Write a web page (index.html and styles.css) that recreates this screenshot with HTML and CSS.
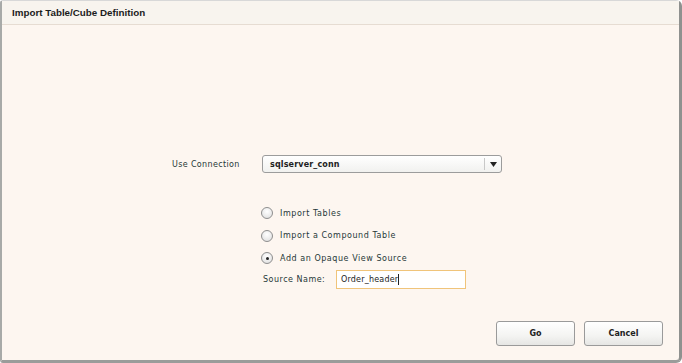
FILE: index.html
```html
<!DOCTYPE html>
<html>
<head>
<meta charset="utf-8">
<link rel="stylesheet" href="styles.css">
</head>
<body>
<div class="dialog">
  <div class="header">Import Table/Cube Definition</div>
  <div class="content">
    <div class="conn-row">
      <div class="label">Use Connection</div>
      <div class="select">
        <span class="select-text">sqlserver_conn</span>
        <span class="select-btn"><svg width="7" height="5" viewBox="0 0 7 5"><path d="M0 0H7L3.5 5Z" fill="#222"/></svg></span>
      </div>
    </div>
    <div class="options">
      <div class="opt"><span class="radio"></span><span>Import Tables</span></div>
      <div class="opt"><span class="radio"></span><span>Import a Compound Table</span></div>
      <div class="opt"><span class="radio checked"></span><span>Add an Opaque View Source</span></div>
      <div class="src-row">
        <span class="src-label">Source Name:</span>
        <div class="input">Order_header<span class="caret"></span></div>
      </div>
    </div>
    <div class="buttons">
      <div class="btn">Go</div>
      <div class="btn">Cancel</div>
    </div>
  </div>
</div>
</body>
</html>
```

FILE: styles.css
```css
html, body {
  margin: 0;
  padding: 0;
  background: #ffffff;
}
body {
  width: 682px;
  height: 363px;
  overflow: hidden;
  font-family: "DejaVu Sans", Verdana, sans-serif;
  font-size: 8px;
  color: #263838;
}
.dialog {
  box-sizing: border-box;
  width: 682px;
  height: 363px;
  display: flex;
  flex-direction: column;
  background: #fdf6f0;
  border-top: 1px solid #d8d8d8;
  border-left: 2px solid #a8aaa8;
  border-right: 3px solid #8f918f;
  border-bottom: 3px solid #9a9c9a;
  border-radius: 3px 6px 6px 3px;
}
.header {
  height: 23px;
  flex: none;
  background: #f8f4ee;
  border-bottom: 1px solid #e6dcd2;
  display: flex;
  align-items: center;
  padding-left: 10px;
  font-family: "Liberation Sans", Arial, sans-serif;
  font-weight: bold;
  font-size: 9.8px;
  color: #1c1c1c;
}
.content {
  flex: 1;
  display: flex;
  flex-direction: column;
}
.conn-row {
  margin-top: 130px;
  padding-left: 170px;
  display: flex;
  align-items: center;
}
.label {
  width: 90px;
  letter-spacing: 0.35px;
}
.select {
  box-sizing: border-box;
  width: 240px;
  height: 18px;
  border: 1px solid #9c9c9c;
  border-radius: 3px;
  background: linear-gradient(#ffffff, #f1f1ef);
  display: flex;
  align-items: center;
}
.select-text {
  flex: 1;
  padding-left: 7px;
  font-weight: bold;
  letter-spacing: 0.15px;
  color: #222;
}
.select-btn {
  width: 16px;
  height: 12px;
  border-left: 1px solid #c8c8c8;
  display: flex;
  align-items: center;
  justify-content: center;
}
.options {
  margin-top: 29px;
  padding-left: 259px;
  display: flex;
  flex-direction: column;
}
.opt {
  height: 22.5px;
  display: flex;
  align-items: center;
  letter-spacing: 0.55px;
}
.radio {
  box-sizing: border-box;
  width: 12px;
  height: 12px;
  border-radius: 50%;
  border: 1px solid #8e8e8e;
  background: radial-gradient(circle at 50% 35%, #ffffff, #dcdcdc);
  margin-right: 7px;
  display: flex;
  align-items: center;
  justify-content: center;
}
.radio.checked::after {
  content: "";
  width: 3px;
  height: 3px;
  border-radius: 50%;
  background: #222;
}
.src-row {
  display: flex;
  align-items: center;
  padding-left: 2px;
  letter-spacing: 0.5px;
}
.src-label {
  width: 73px;
}
.input {
  box-sizing: border-box;
  width: 130px;
  height: 19px;
  border: 1px solid #f0c47a;
  background: #ffffff;
  display: flex;
  align-items: center;
  padding-left: 4px;
  letter-spacing: 0.2px;
  color: #222;
}
.caret {
  width: 1px;
  height: 11px;
  background: #222;
}
.buttons {
  margin-top: auto;
  margin-bottom: 14px;
  padding-right: 16px;
  display: flex;
  justify-content: flex-end;
  gap: 9px;
}
.btn {
  box-sizing: border-box;
  width: 79px;
  height: 25px;
  border: 1px solid #9a9a9a;
  border-radius: 3px;
  background: linear-gradient(#ffffff, #f4f4f2 60%, #e6e6e4);
  display: flex;
  align-items: center;
  justify-content: center;
  font-weight: bold;
  color: #222;
}
```
